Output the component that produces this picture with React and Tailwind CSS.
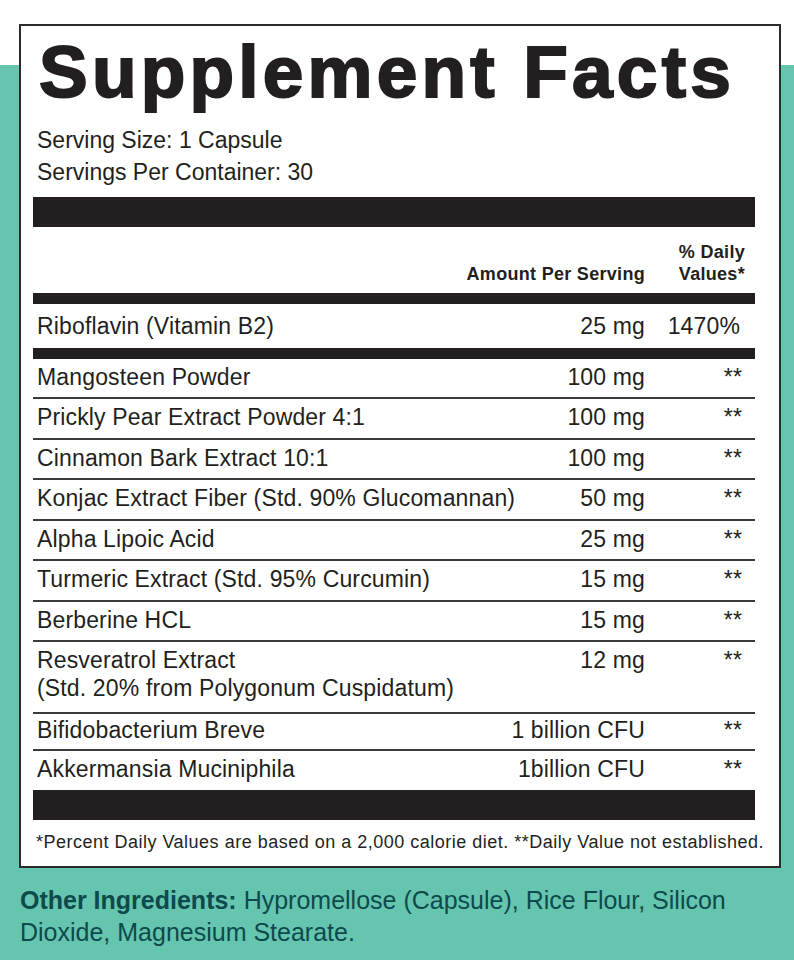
export default function App() {
  const rows = [
    { name: 'Mangosteen Powder', amount: '100 mg' },
    { name: 'Prickly Pear Extract Powder 4:1', amount: '100 mg' },
    { name: 'Cinnamon Bark Extract 10:1', amount: '100 mg' },
    { name: 'Konjac Extract Fiber (Std. 90% Glucomannan)', amount: '50 mg' },
    { name: 'Alpha Lipoic Acid', amount: '25 mg' },
    { name: 'Turmeric Extract (Std. 95% Curcumin)', amount: '15 mg' },
    { name: 'Berberine HCL', amount: '15 mg' },
  ];

  return (
    <div className="min-h-[960px] w-[794px] bg-[linear-gradient(to_bottom,#ffffff_65px,#66c5af_65px)] pt-[24px] font-['Liberation_Sans',Arial,sans-serif] text-[#231f20]">
      {/* Label box */}
      <div className="ml-[19px] w-[762px] border-2 border-[#2b2b2b] bg-white pl-[12px] pr-[24px]">
        <h1 className="mt-[9px] pl-[6px] text-[73px] font-bold leading-[73px] tracking-[4.2px] whitespace-nowrap [-webkit-text-stroke:2px_#231f20]">
          Supplement Facts
        </h1>

        <div className="mt-[16px] pl-[4px] text-[23px] leading-[32px]">
          <p>Serving Size: 1 Capsule</p>
          <p>Servings Per Container: 30</p>
        </div>

        <div className="mt-[8.6px] h-[30px] bg-[#231f20]" />

        {/* Column headers */}
        <div className="flex h-[66px] items-end pb-[8px] text-[18px] font-bold leading-[22px] tracking-[0.3px]">
          <div className="flex-1" />
          <div className="text-right">Amount Per Serving</div>
          <div className="w-[110px] pr-[10px] text-right">
            <p>% Daily</p>
            <p>Values*</p>
          </div>
        </div>

        <div className="h-[11px] bg-[#231f20]" />

        <div className="flex h-[44px] items-center pl-[4px] text-[23px] leading-[28px] tracking-[0.15px]">
          <div className="flex-1">Riboflavin (Vitamin B2)</div>
          <div className="text-right">25 mg</div>
          <div className="w-[110px] pr-[15px] text-right">1470%</div>
        </div>

        <div className="h-[11px] bg-[#231f20]" />

        {rows.map((r) => (
          <div key={r.name}>
            <div className="flex h-[38.5px] pl-[4px] pt-[4px] text-[23px] leading-[28px] tracking-[0.15px]">
              <div className="flex-1">{r.name}</div>
              <div className="text-right">{r.amount}</div>
              <div className="w-[110px] pr-[13px] text-right">**</div>
            </div>
            <div className="h-[2px] bg-[#3a3a3a]" />
          </div>
        ))}

        <div className="flex h-[70px] pl-[4px] pt-[4px] text-[23px] leading-[28px] tracking-[0.15px]">
          <div className="flex-1">
            <p>Resveratrol Extract</p>
            <p>(Std. 20% from Polygonum Cuspidatum)</p>
          </div>
          <div className="text-right">12 mg</div>
          <div className="w-[110px] pr-[13px] text-right">**</div>
        </div>
        <div className="h-[2px] bg-[#3a3a3a]" />

        <div className="flex h-[35px] pl-[4px] pt-[2px] text-[23px] leading-[28px] tracking-[0.15px]">
          <div className="flex-1">Bifidobacterium Breve</div>
          <div className="text-right">1 billion CFU</div>
          <div className="w-[110px] pr-[13px] text-right">**</div>
        </div>
        <div className="h-[2px] bg-[#3a3a3a]" />

        <div className="flex h-[38.5px] pl-[4px] pt-[4px] text-[23px] leading-[28px] tracking-[0.15px]">
          <div className="flex-1">Akkermansia Muciniphila</div>
          <div className="text-right">1billion CFU</div>
          <div className="w-[110px] pr-[13px] text-right">**</div>
        </div>

        <div className="h-[30px] bg-[#231f20]" />

        <div className="-mr-[24px] -ml-[12px] flex h-[46px] items-center justify-center whitespace-nowrap text-[18px] tracking-[0.5px]">
          *Percent Daily Values are based on a 2,000 calorie diet. **Daily Value not established.
        </div>
      </div>

      {/* Other ingredients */}
      <p className="mt-[16px] px-[20px] text-[25px] leading-[32px] text-[#0d4a4c]">
        <b>Other Ingredients:</b> Hypromellose (Capsule), Rice Flour, Silicon Dioxide, Magnesium Stearate.
      </p>
    </div>
  );
}
